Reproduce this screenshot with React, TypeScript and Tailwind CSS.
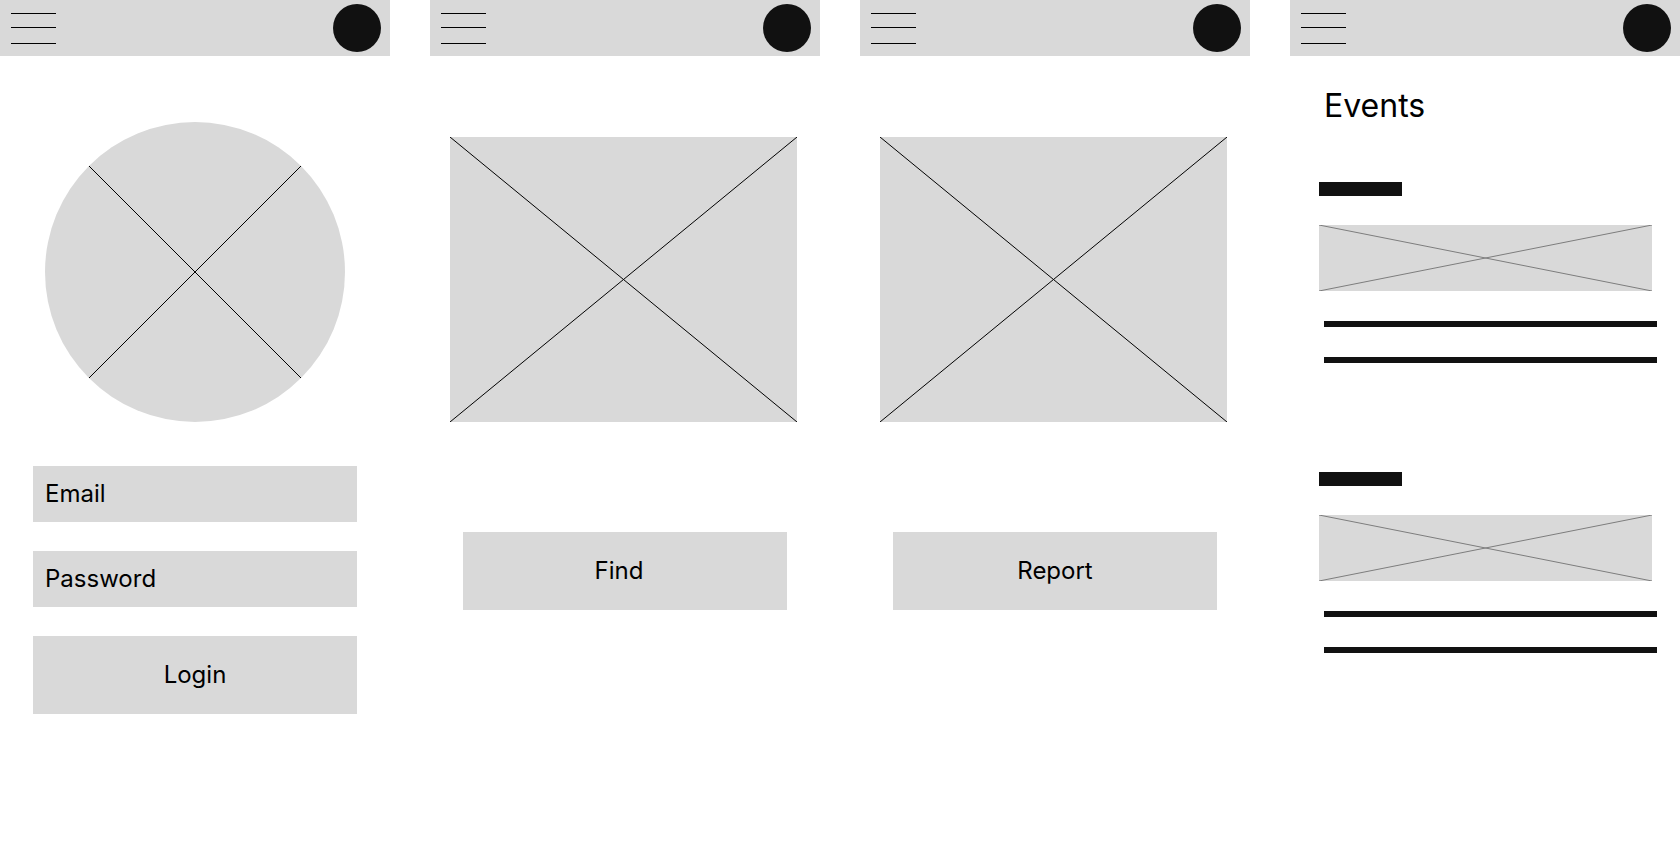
import React from 'react'

function Header() {
  return (
    <div className="h-[56px] bg-[#d9d9d9] flex items-start justify-between pl-[11px] pr-[9px]">
      <div className="pt-[13px]">
        <div className="h-px w-[45px] bg-black" />
        <div className="h-px w-[45px] bg-black mt-[13px]" />
        <div className="h-px w-[45px] bg-black mt-[15px]" />
      </div>
      <div className="mt-[4px] w-[48px] h-[48px] rounded-full bg-[#111111]" />
    </div>
  )
}

function CrossBox({ w, h, stroke = '#000', className = '' }: { w: number; h: number; stroke?: string; className?: string }) {
  return (
    <svg width={w} height={h} viewBox={`0 0 ${w} ${h}`} className={`block ${className}`}>
      <rect x="0" y="0" width={w} height={h} fill="#d9d9d9" />
      <line x1="0" y1="0" x2={w} y2={h} stroke={stroke} strokeWidth="1" />
      <line x1="0" y1={h} x2={w} y2="0" stroke={stroke} strokeWidth="1" />
    </svg>
  )
}

function Avatar() {
  return (
    <svg width="300" height="300" viewBox="0 0 300 300" className="block mx-auto mt-[66px]">
      <circle cx="150" cy="150" r="150" fill="#d9d9d9" />
      <line x1="44" y1="44" x2="256" y2="256" stroke="#000" strokeWidth="1" />
      <line x1="44" y1="256" x2="256" y2="44" stroke="#000" strokeWidth="1" />
    </svg>
  )
}

function Button({ label, className = '' }: { label: string; className?: string }) {
  return (
    <div className={`mx-auto w-[324px] h-[78px] bg-[#d9d9d9] flex items-center justify-center text-[24px] text-black ${className}`}>
      {label}
    </div>
  )
}

function Field({ label, className = '' }: { label: string; className?: string }) {
  return (
    <div className={`mx-auto w-[324px] h-[56px] bg-[#d9d9d9] flex items-center pl-[12px] text-[24px] text-black ${className}`}>
      {label}
    </div>
  )
}

function EventItem({ className = '' }: { className?: string }) {
  return (
    <div className={className}>
      <div className="ml-[29px] w-[83px] h-[14px] bg-[#111111]" />
      <CrossBox w={333} h={66} stroke="#7d7d7d" className="ml-[29px] mt-[29px]" />
      <div className="ml-[34px] mt-[30px] w-[333px] h-[6px] bg-[#111111]" />
      <div className="ml-[34px] mt-[30px] w-[333px] h-[6px] bg-[#111111]" />
    </div>
  )
}

export default function App() {
  return (
    <div className="w-[1680px] h-[844px] bg-white flex gap-[40px] font-['Inter',sans-serif] overflow-hidden">
      <div className="w-[390px] shrink-0">
        <Header />
        <Avatar />
        <Field label="Email" className="mt-[44px]" />
        <Field label="Password" className="mt-[29px]" />
        <Button label="Login" className="mt-[29px]" />
      </div>

      <div className="w-[390px] shrink-0">
        <Header />
        <CrossBox w={347} h={285} className="ml-[20px] mt-[81px]" />
        <Button label="Find" className="mt-[110px] pr-[12px]" />
      </div>

      <div className="w-[390px] shrink-0">
        <Header />
        <CrossBox w={347} h={285} className="ml-[20px] mt-[81px]" />
        <Button label="Report" className="mt-[110px]" />
      </div>

      <div className="w-[390px] shrink-0">
        <Header />
        <h1 className="ml-[34px] mt-[30px] text-[32px] leading-[39px] font-normal text-black">Events</h1>
        <EventItem className="mt-[57px]" />
        <EventItem className="mt-[109px]" />
      </div>
    </div>
  )
}
